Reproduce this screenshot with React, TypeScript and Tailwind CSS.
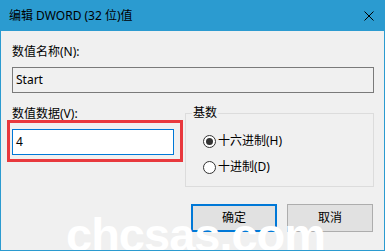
function CloseIcon() {
	return (
		<svg width="10" height="10" viewBox="0 0 10 10" className="block">
			<path d="M0.5 0.5 L9.5 9.5 M9.5 0.5 L0.5 9.5" stroke="#000" strokeWidth="1" fill="none" />
		</svg>
	);
}

function Radio({ checked, label }: { checked?: boolean; label: string }) {
	return (
		<div className="flex h-[16px] items-center">
			<div className="ml-[11px] flex h-[13px] w-[13px] items-center justify-center rounded-full border border-[#333333] bg-white">
				{checked && <div className="h-[7px] w-[7px] rounded-full bg-[#333333]" />}
			</div>
			<span className="ml-[2px] leading-[16px]">{label}</span>
		</div>
	);
}

export default function App() {
	return (
		<div className="relative h-[251px] w-[385px] overflow-hidden border border-[#2b9bd0] bg-[#f0f0f0] font-['Noto_Sans','Noto_Sans_CJK_SC',sans-serif] text-[12px] text-black">
			{/* title bar */}
			<div className="flex h-[30px] items-center justify-between bg-[#2b9bd0] pl-[8px] pr-[10px]">
				<span className="leading-[16px]">编辑 DWORD (32 位)值</span>
				<CloseIcon />
			</div>

			<div className="pl-[11px] pr-[10px]">
				<div className="mt-[13px] h-[16px] leading-[16px]">数值名称(N):</div>
				<div className="mt-[7px] flex h-[26px] items-center border border-[#7a7a7a] bg-[#f0f0f0] px-[3px]">
					Start
				</div>

				<div className="mt-[12px] flex items-start">
					<div className="w-[162px] pt-[2px]">
						<div className="h-[13px] leading-[13px]">数值数据(V):</div>
						<div className="-ml-[5px] h-[42px] w-[176px] border-[3px] border-[#e8383d] pl-[2px] pt-[6px]">
							<div className="flex h-[26px] w-[162px] items-center border border-[#0078d7] bg-white px-[3px]">
								4
							</div>
						</div>
					</div>

					<fieldset className="ml-[11px] w-[189px] border border-[#dcdcdc] px-[6px] pb-[11px]">
						<legend className="px-[1px] leading-[16px]">基数</legend>
						<div className="mt-[12px]">
							<Radio checked label="十六进制(H)" />
						</div>
						<div className="mt-[10px]">
							<Radio label="十进制(D)" />
						</div>
					</fieldset>
				</div>

				<div className="mr-[1px] mt-[17px] flex justify-end gap-[10px]">
					<button className="flex h-[28px] w-[86px] items-center justify-center border-2 border-[#0078d7] bg-[#e1e1e1]">
						确定
					</button>
					<button className="flex h-[28px] w-[86px] items-center justify-center border border-[#adadad] bg-[#e1e1e1]">
						取消
					</button>
				</div>
			</div>

			{/* watermark */}
			<div className="pointer-events-none absolute left-[65px] top-[210px] font-['Liberation_Sans',sans-serif] text-[47px] font-bold leading-none tracking-[-1px] text-white">
				chcsas.com
			</div>
		</div>
	);
}
